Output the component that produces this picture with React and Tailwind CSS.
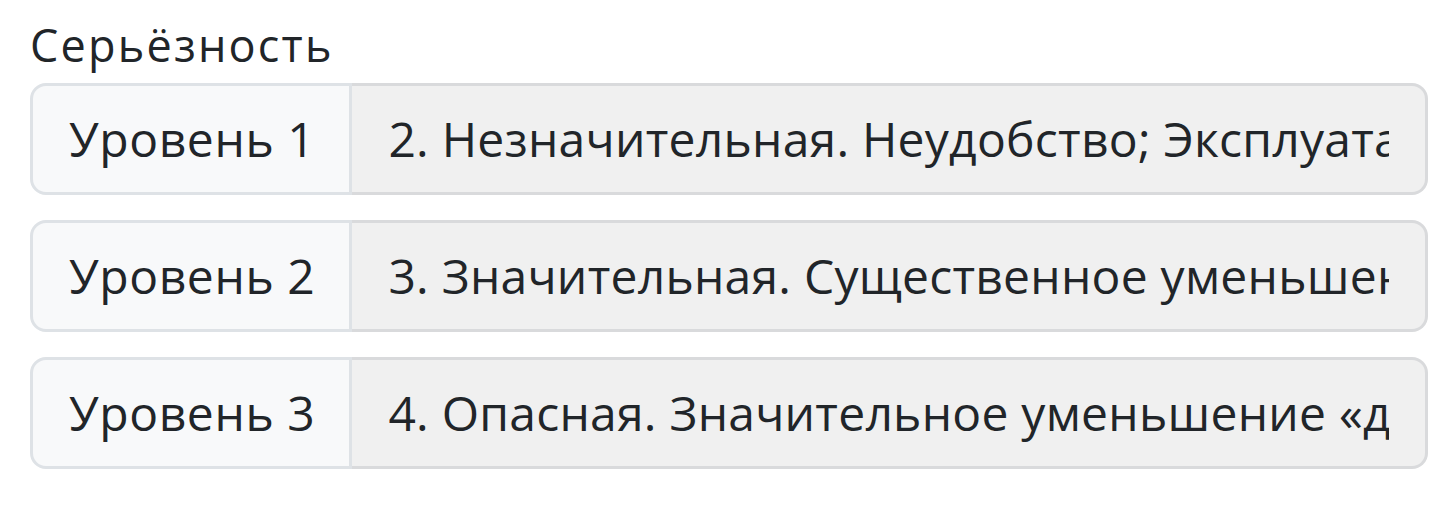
import React from 'react';

const rows = [
  { level: 'Уровень 1', value: '2. Незначительная. Неудобство; Эксплуатационные ограничения; Незначительное увеличение рабочей нагрузки' },
  { level: 'Уровень 2', value: '3. Значительная. Существенное уменьшение запасов безопасности' },
  { level: 'Уровень 3', value: '4. Опасная. Значительное уменьшение «допусков» безопасности' },
];

const font = { fontFamily: '"Open Sans", "Noto Sans", sans-serif' };

const App = () => {
  return (
    <div className="min-h-screen bg-white pl-[30px] pr-[27px] pt-[15px] text-[#212529]" style={font}>
      {/* Label */}
      <div className="text-[45px] leading-[60px] tracking-[2.2px] mb-[8px]">Серьёзность</div>

      {/* Level rows */}
      <div className="flex flex-col gap-[25px]">
        {rows.map((row) => (
          <div key={row.level} className="flex h-[112px] w-full">
            <span className="flex items-center bg-[#f8f9fa] border-[3px] border-[#dee2e6] rounded-l-[16px] pl-[36px] pr-[34px] text-[48px] tracking-[0.6px] whitespace-nowrap">
              {row.level}
            </span>
            <input
              readOnly
              value={row.value}
              className="flex-1 min-w-0 bg-[#f0f0f0] border-[3px] border-l-0 border-[#d9dadc] rounded-r-[16px] pl-[36px] pr-[36px] text-[48px] tracking-[0.25px] text-[#212529] outline-none"
              style={font}
            />
          </div>
        ))}
      </div>
    </div>
  );
};

export default App;
